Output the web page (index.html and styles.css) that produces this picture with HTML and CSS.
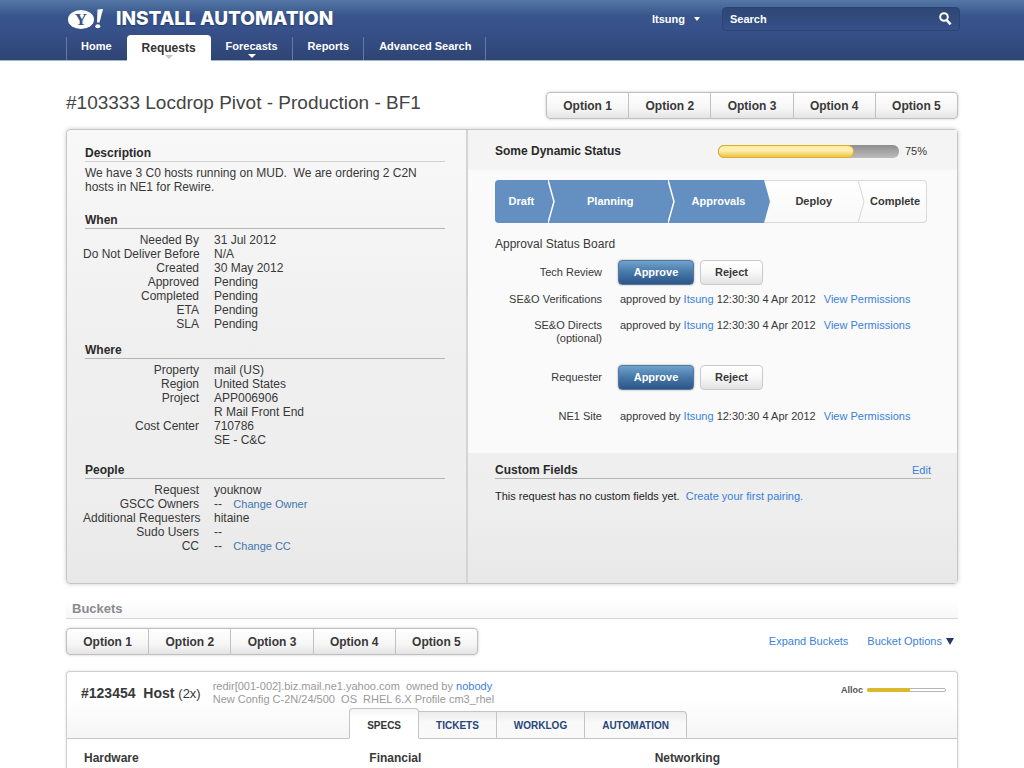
FILE: index.html
```html
<!DOCTYPE html>
<html lang="en">
<head>
<meta charset="utf-8">
<title>Install Automation</title>
<link rel="stylesheet" href="styles.css">
</head>
<body>
<header class="masthead">
  <div class="masthead-top">
    <a class="brand" href="#">
      <svg class="logo" viewBox="0 0 36 22" width="36" height="22" aria-label="Y!">
        <ellipse cx="13" cy="11.500" rx="13" ry="9.500" fill="#fff"/>
        <text x="13" y="17" text-anchor="middle" class="logo-y">Y</text>
        <path d="M29.500 1.500 L35 1 L31.500 14.500 L29 14.500 Z" fill="#fff"/>
        <ellipse cx="29.800" cy="18.300" rx="2.500" ry="2" fill="#fff"/>
      </svg>
      <span class="brand-name">INSTALL AUTOMATION</span>
    </a>
    <div class="tools">
      <button class="user" type="button">Itsung <svg width="6" height="4" viewBox="0 0 6 4"><path d="M0 0h6L3 4z" fill="#fff"/></svg></button>
      <form class="search">
        <input type="text" placeholder="Search" aria-label="Search">
        <button type="submit" aria-label="Go"><svg width="13" height="14" viewBox="0 0 13 14" fill="none" stroke="#fff"><circle cx="5" cy="5" r="3.800" stroke-width="2"/><path d="M7.600 8l4 4.400" stroke-width="2.600"/></svg></button>
      </form>
    </div>
  </div>
  <nav class="nav">
    <a href="#">Home</a>
    <a href="#" class="active">Requests<svg class="caret" width="8" height="4" viewBox="0 0 8 4"><path d="M0 0h8L4 4z" fill="#c4c4c4"/></svg></a>
    <a href="#">Forecasts<svg class="caret" width="8" height="4" viewBox="0 0 8 4"><path d="M0 0h8L4 4z" fill="#fff"/></svg></a>
    <a href="#">Reports</a>
    <a href="#">Advanced Search</a>
  </nav>
</header>

<main class="page">
  <div class="title-row">
    <h1>#103333 Locdrop Pivot - Production - BF1</h1>
    <div class="btn-group">
      <button type="button">Option 1</button><button type="button">Option 2</button><button type="button">Option 3</button><button type="button">Option 4</button><button type="button">Option 5</button>
    </div>
  </div>

  <section class="panel">
    <div class="details">
      <h2>Description</h2>
      <p>We have 3 C0 hosts running on MUD.&nbsp; We are ordering 2 C2N hosts in NE1 for Rewire.</p>

      <h2>When</h2>
      <dl>
        <dt>Needed By</dt><dd>31 Jul 2012</dd>
        <dt>Do Not Deliver Before</dt><dd>N/A</dd>
        <dt>Created</dt><dd>30 May 2012</dd>
        <dt>Approved</dt><dd>Pending</dd>
        <dt>Completed</dt><dd>Pending</dd>
        <dt>ETA</dt><dd>Pending</dd>
        <dt>SLA</dt><dd>Pending</dd>
      </dl>

      <h2 class="near">Where</h2>
      <dl>
        <dt>Property</dt><dd>mail (US)</dd>
        <dt>Region</dt><dd>United States</dd>
        <dt>Project</dt><dd>APP006906<br>R Mail Front End</dd>
        <dt>Cost Center</dt><dd>710786<br>SE - C&amp;C</dd>
      </dl>

      <h2>People</h2>
      <dl>
        <dt>Request</dt><dd>youknow</dd>
        <dt>GSCC Owners</dt><dd>-- <a href="#">Change Owner</a></dd>
        <dt>Additional Requesters</dt><dd>hitaine</dd>
        <dt>Sudo Users</dt><dd>--</dd>
        <dt>CC</dt><dd>-- <a href="#">Change CC</a></dd>
      </dl>
    </div>

    <div class="status">
      <div class="status-head">
        <h2 id="status-title">Some Dynamic Status</h2>
        <div class="progress" role="progressbar" aria-labelledby="status-title" aria-valuenow="75"><div class="progress-fill" style="width:75%"></div></div>
        <span>75%</span>
      </div>
      <div class="status-body">
        <ol class="steps">
          <li class="done draft">Draft<svg class="arrow" width="8" height="43" viewBox="0 0 8 43"><path d="M0 0L6 21.500L0 43" fill="#6390c1" stroke="#fff" stroke-width="1.500"/></svg></li>
          <li class="done planning">Planning<svg class="arrow" width="8" height="43" viewBox="0 0 8 43"><path d="M0 0L6 21.500L0 43" fill="#6390c1" stroke="#fff" stroke-width="1.500"/></svg></li>
          <li class="done approvals">Approvals<svg class="arrow" width="8" height="43" viewBox="0 0 8 43"><path d="M0 0L6 21.500L0 43" fill="#6390c1"/></svg></li>
          <li class="deploy">Deploy<svg class="arrow" width="8" height="43" viewBox="0 0 8 43"><path d="M0 0L6 21.500L0 43" fill="none" stroke="#d6d6d6"/></svg></li>
          <li class="complete">Complete</li>
        </ol>
        <h3>Approval Status Board</h3>
        <div class="board">
          <div class="row buttons"><span class="label">Tech Review</span><div class="actions"><button type="button" class="approve">Approve</button><button type="button" class="reject">Reject</button></div></div>
          <div class="row"><span class="label">SE&amp;O Verifications</span><div class="note">approved by <a href="#">Itsung</a> 12:30:30 4 Apr 2012 <a href="#" class="perm">View Permissions</a></div></div>
          <div class="row optional"><span class="label">SE&amp;O Directs<br>(optional)</span><div class="note">approved by <a href="#">Itsung</a> 12:30:30 4 Apr 2012 <a href="#" class="perm">View Permissions</a></div></div>
          <div class="row buttons spaced"><span class="label">Requester</span><div class="actions"><button type="button" class="approve">Approve</button><button type="button" class="reject">Reject</button></div></div>
          <div class="row spaced"><span class="label">NE1 Site</span><div class="note">approved by <a href="#">Itsung</a> 12:30:30 4 Apr 2012 <a href="#" class="perm">View Permissions</a></div></div>
        </div>
      </div>
      <div class="custom">
        <div class="custom-head"><h2>Custom Fields</h2><a href="#">Edit</a></div>
        <p>This request has no custom fields yet.&nbsp; <a href="#">Create your first pairing.</a></p>
      </div>
    </div>
  </section>

  <h2 class="buckets-title">Buckets</h2>
  <div class="bucket-bar">
    <div class="btn-group">
      <button type="button">Option 1</button><button type="button">Option 2</button><button type="button">Option 3</button><button type="button">Option 4</button><button type="button">Option 5</button>
    </div>
    <div class="bucket-links">
      <a href="#">Expand Buckets</a>
      <a href="#">Bucket Options <svg width="8" height="7" viewBox="0 0 8 7"><path d="M0 0h8L4 7z" fill="#1f3a6b"/></svg></a>
    </div>
  </div>

  <section class="bucket">
    <div class="bucket-head">
      <div class="bucket-info">
        <h3>#123454&nbsp; Host <span>(2x)</span></h3>
        <p>redir[001-002].biz.mail.ne1.yahoo.com&nbsp; owned by <a href="#">nobody</a><br>New Config C-2N/24/500&nbsp; OS&nbsp; RHEL 6.X Profile cm3_rhel</p>
        <div class="alloc"><span>Alloc</span><div class="alloc-bar"><div class="alloc-fill" style="width:56%"></div></div></div>
      </div>
      <div class="tabs">
        <button type="button" class="selected">SPECS</button><button type="button">TICKETS</button><button type="button">WORKLOG</button><button type="button">AUTOMATION</button>
      </div>
    </div>
    <div class="specs">
      <h4>Hardware</h4>
      <h4>Financial</h4>
      <h4>Networking</h4>
    </div>
  </section>
</main>
</body>
</html>
```
FILE: styles.css
```css
* { box-sizing: border-box; }
body {
  margin: 0;
  min-height: 100vh;
  display: flex;
  flex-direction: column;
  background: #fff;
  color: #383838;
  font: 12px/14px "Liberation Sans", Arial, sans-serif;
}
h1, h2, h3, h4, p, dl, dd, ol { margin: 0; padding: 0; }
a { color: #3b7fdb; text-decoration: none; }
button, input { font: inherit; color: inherit; margin: 0; padding: 0; border: 0; background: none; }
button { cursor: pointer; }

/* Masthead */
.masthead {
  padding: 0 64px 0 66px;
  background: linear-gradient(#5477a6 0, #38558b 16px, #37518a 30px, #2f4474 60px);
  border-bottom: 1px solid #9fb9cc;
  color: #fff;
  font-size: 11px;
  font-weight: bold;
}
.masthead a { color: #fff; }
.masthead-top { display: flex; justify-content: space-between; align-items: center; height: 35px; padding-top: 2px; }
.brand { display: flex; align-items: center; gap: 12px; padding-left: 2px; }
.logo { display: block; }
.logo-y { font: bold 17px "Liberation Serif", serif; fill: #37538a; }
.brand-name { font: 800 19px/22px Inter, sans-serif; text-shadow: 0 1px 1px #223a6b; }
.tools { display: flex; align-items: center; gap: 22px; }
.user { display: flex; align-items: center; gap: 9px; }
.search {
  display: flex;
  align-items: center;
  width: 238px;
  height: 24px;
  padding: 0 7px;
  border: 1px solid #2c4372;
  border-radius: 4px;
  background: linear-gradient(#2f4774, #36508a);
}
.search input { flex: 1; min-width: 0; outline: 0; }
.search input::placeholder { color: #fff; opacity: 1; }
.search button, .search svg { display: block; }
.nav { display: flex; align-items: flex-end; gap: 1px; height: 25px; }
.nav a {
  position: relative;
  height: 23px;
  padding: 0 14px;
  border-right: 1px solid #657aa6;
  line-height: 18px;
}
.nav a:first-child { border-left: 1px solid #657aa6; border-right: 0; }
.nav a.active {
  height: 26px;
  margin-bottom: -1px;
  padding: 0 15px;
  border: 0;
  border-radius: 4px 4px 0 0;
  background: #fff;
  color: #333;
  font-size: 12px;
  line-height: 26px;
}
.caret { position: absolute; left: 50%; bottom: 2px; margin-left: -4px; }

/* Page */
.page { flex: 1; display: flex; flex-direction: column; padding: 31px 66px 0; }
.title-row { display: flex; justify-content: space-between; align-items: center; margin-bottom: 10px; }
h1 { font-size: 19px; line-height: 21px; font-weight: normal; color: #444; padding-bottom: 6px; }
.btn-group {
  display: flex;
  width: 412px;
  height: 27px;
  border: 1px solid #bfbfbf;
  border-radius: 4px;
  background: linear-gradient(#fff, #f6f6f6 60%, #e4e4e4);
  box-shadow: 0 0 3px #ccc;
}
.btn-group button { flex: 1; font-weight: bold; border-left: 1px solid #c2c2c2; }
.btn-group button:first-child { border-left: 0; }

.panel {
  display: grid;
  grid-template-columns: 399fr 491fr;
  border: 1px solid #c6c6c6;
  border-radius: 4px;
  background: linear-gradient(#f8f8f8, #efefef 50%, #eeeeee 80%, #e8e8e8);
  box-shadow: 0 0 4px #ccc;
}
.panel h2 { font-size: 12px; line-height: 16px; color: #2a2a2a; }
.details { padding: 15px 21px 30px 18px; }
.details h2 { margin-top: 15px; border-bottom: 1px solid #b4b4b4; }
.details h2:first-child { margin-top: 0; border-color: #d2d2d2; }
.details h2.near { margin-top: 11px; }
.details p { padding-top: 4px; margin-bottom: 18px; }
.details dl {
  display: grid;
  grid-template-columns: 116px 1fr;
  column-gap: 15px;
  margin-left: -2px;
  padding-top: 4px;
}
.details dt { text-align: right; white-space: nowrap; }
.details dd a { margin-left: 8px; font-size: 11px; color: #4377ad; }

.status { display: flex; flex-direction: column; border-left: 2px solid #d4d4d4; }
.status-head { display: flex; align-items: center; height: 40px; padding: 2px 30px 0 27px; background: #f4f4f4; font-size: 11px; }
.progress { width: 181px; height: 13px; margin: 0 6px 0 auto; border-radius: 6px; background: linear-gradient(#8d8d8d, #bdbdbd); }
.progress-fill { height: 13px; border: 1px solid #dcb02c; border-radius: 6px; background: linear-gradient(#ffeaa0, #fff0b4 40%, #f2c341); }
.status-body { padding: 10px 30px 30px 27px; background: #fafafa; font-size: 11px; line-height: 13px; }
.steps {
  display: flex;
  height: 43px;
  list-style: none;
  border-radius: 4px;
  overflow: hidden;
  font-weight: bold;
  line-height: 43px;
  text-align: center;
  background: linear-gradient(#fff, #f8f8f8);
  box-shadow: inset 0 0 0 1px #dadada;
}
.steps li { position: relative; padding-left: 5px; }
.steps .done { background: #6390c1; color: #fff; }
.steps .draft { flex: 53 1 0; padding-left: 0; }
.steps .planning { flex: 115 1 0; }
.steps .approvals { flex: 92 1 0; }
.steps .deploy { flex: 89 1 0; }
.steps .complete { flex: 64 1 0; }
.arrow { position: absolute; left: 100%; top: 0; z-index: 1; }
.status-body h3 { margin-top: 13px; font-size: 12px; line-height: 16px; font-weight: normal; }
.row { display: grid; grid-template-columns: 107px 1fr; column-gap: 16px; margin-top: 8px; }
.row.buttons { align-items: center; }
.row.optional { margin-top: 13px; }
.row.spaced { margin-top: 20px; }
.label { text-align: right; }
.note { padding-left: 2px; white-space: nowrap; }
.perm { margin-left: 5px; }
.actions { display: flex; gap: 6px; }
.actions button { height: 25px; border-radius: 4px; font-weight: bold; border: 1px solid #c9c9c9; }
.actions .approve {
  width: 76px;
  border-color: #54779c;
  background: linear-gradient(#6fa3cb, #4577a8 50%, #2c5487);
  box-shadow: 0 0 2px #999;
  color: #fff;
}
.actions .reject { width: 63px; background: linear-gradient(#fff, #f8f8f8 50%, #e2e2e2); }
.custom { flex: 1; padding: 9px 26px 0 27px; background: linear-gradient(#efefef, #eeeeee 40%, #e8e8e8); font-size: 11px; line-height: 13px; color: #1c1c1c; }
.custom-head { display: flex; justify-content: space-between; align-items: center; border-bottom: 1px solid #b4b4b4; }
.custom p { margin-top: 11px; }

/* Buckets */
.buckets-title {
  margin-top: 16px;
  padding: 0 6px;
  border-bottom: 1px solid #d6d6d6;
  background: linear-gradient(#fff, #f7f7f7);
  color: #8a8b90;
  font-size: 13px;
  line-height: 18px;
}
.bucket-bar { display: flex; justify-content: space-between; align-items: center; margin: 9px 0 16px; }
.bucket-links { display: flex; gap: 19px; padding-right: 4px; padding-bottom: 2px; font-size: 11px; }
.bucket-links svg { margin-left: 1px; }
.bucket {
  flex: 1;
  border: 1px solid #cfcfcf;
  border-bottom: 0;
  border-radius: 4px 4px 0 0;
  box-shadow: 0 0 3px #ddd;
}
.bucket-head { padding: 8px 11px 0 14px; border-bottom: 1px solid #c4c4c4; background: linear-gradient(#fff 40%, #f5f5f5); border-radius: 4px 4px 0 0; }
.bucket-info { display: flex; gap: 12px; height: 28px; }
.bucket-info h3 { font-size: 14px; line-height: 27px; }
.bucket-info h3 span { font-weight: normal; font-size: 13px; }
.bucket-info p { font-size: 11px; line-height: 13px; color: #999; }
.alloc { display: flex; align-items: center; gap: 4px; height: 20px; margin-left: auto; font-size: 9px; font-weight: bold; color: #555; }
.alloc-bar { width: 79px; height: 4px; border: 1px solid #b5b5b5; border-radius: 2px; background: #fff; }
.alloc-fill { height: 4px; margin: -1px; border-radius: 2px 0 0 2px; background: #dcb82c; }
.tabs { display: flex; align-items: flex-end; justify-content: flex-start; padding-left: 31%; margin-bottom: -1px; }
.tabs button {
  height: 28px;
  padding: 1px 17px 0;
  border: 1px solid #c4c4c4;
  border-left-width: 0;
  background: linear-gradient(#ebebeb, #f9f9f9 40%);
  color: #27457a;
  font-size: 10px;
  font-weight: bold;
}
.tabs button:last-child { border-radius: 0 4px 0 0; }
.tabs .selected { height: 31px; border-left-width: 1px; border-bottom-color: #fff; border-radius: 4px 4px 0 0; background: linear-gradient(#f4f4f4, #fff 30%); color: #333; padding-top: 4px; }
.specs { display: grid; grid-template-columns: repeat(3, 1fr); padding: 11px 17px 0; }
.specs h4 { font-size: 12px; line-height: 16px; }
```
